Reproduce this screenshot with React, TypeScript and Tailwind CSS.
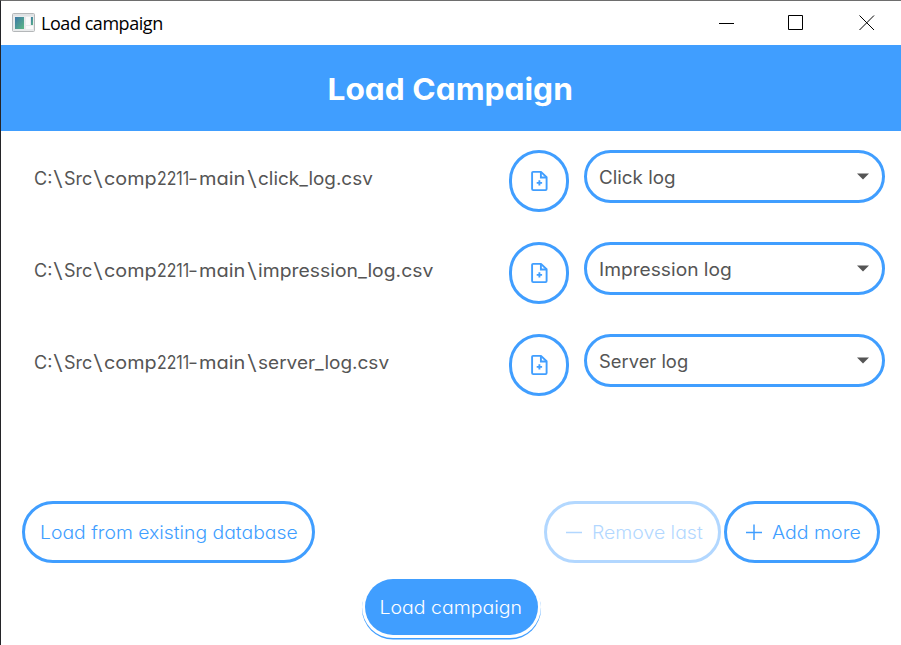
import React from "react";

const rows = [
  { file: "click_log.csv", type: "Click log", fileClass: "scale-x-[1.05]", typeClass: "scale-x-[1.045]" },
  { file: "impression_log.csv", type: "Impression log", fileClass: "scale-x-[1.075]", typeClass: "scale-x-[1.065]" },
  { file: "server_log.csv", type: "Server log", fileClass: "scale-x-[1.055]", typeClass: "scale-x-[1.02]" },
];

function AppIcon() {
  return (
    <svg width="24" height="20" viewBox="0 0 24 20" className="ml-[11px] shrink-0">
      <defs>
        <linearGradient id="pane" x1="0" y1="0" x2="1" y2="1">
          <stop offset="0" stopColor="#3d78a8" />
          <stop offset="1" stopColor="#5cb884" />
        </linearGradient>
      </defs>
      <rect x="0.5" y="0.5" width="22" height="18" rx="1" fill="#e9ebec" stroke="#b4b7b9" />
      <path d="M1 2H22" stroke="#d6dadd" />
      <rect x="3" y="4" width="9" height="12" fill="url(#pane)" />
      <rect x="14" y="4" width="4" height="8" fill="#fafafa" />
      <rect x="19" y="4" width="2" height="8" fill="url(#pane)" />
      <rect x="14" y="13" width="7" height="3" fill="#fafafa" />
    </svg>
  );
}

function FilePlus() {
  return (
    <svg width="20" height="22" viewBox="0 0 20 22" fill="none" stroke="#409eff" strokeWidth="1.9">
      <path d="M4.1 1.9H12L17.6 7.2V19Q17.6 20.1 16.5 20.1H4.3Q3.1 20.1 3.1 19V3Q3.1 1.9 4.1 1.9Z" strokeLinejoin="round" />
      <path d="M11.9 2V7.5H17.5M10.4 10.2V15.6M7.7 12.9H13.1" />
    </svg>
  );
}

function Backslash() {
  return (
    <span className="w-[10px] shrink-0 text-center">
      <span className="inline-block scale-x-[1.6] scale-y-[1.15] font-light">\</span>
    </span>
  );
}

export default function App() {
  return (
    <div className="flex h-[645px] w-[901px] flex-col overflow-hidden border-l border-t border-l-[#242428] border-t-[#6e6e6e] bg-white font-['Inter','Liberation_Sans',sans-serif] [font-feature-settings:'cv11']">
      <header className="flex h-11 shrink-0 items-center">
        <AppIcon />
        <span className="ml-[5px] font-['Open_Sans','Noto_Sans',sans-serif] text-[18px] leading-6 tracking-[-0.45px] text-black [font-feature-settings:normal]">Load campaign</span>
        <div className="ml-auto mr-[26px] flex items-center gap-[54px]">
          <svg width="16" height="16" viewBox="0 0 16 16" className="mr-[-1px]"><path d="M0 8.5H15" stroke="#000" /></svg>
          <svg width="16" height="16" viewBox="0 0 16 16" fill="none"><path d="M.5 .5H14.5V14.5H.5Z" stroke="#000" /></svg>
          <svg width="16" height="16" viewBox="0 0 16 16" className="ml-px"><path d="M.5 .5L15 15M15 .5L.5 15" stroke="#000" /></svg>
        </div>
      </header>
      <h1 className="flex h-[86px] shrink-0 items-center justify-center bg-[#409eff] pr-[2px] pt-[3px] text-[30px] font-bold text-white">
        <span className="scale-x-[1.056]">Load Campaign</span>
      </h1>
      <main className="flex h-[370px] shrink-0 flex-col gap-[30px] pl-[33px] pr-4 pt-[19px]">
        {rows.map((r) => (
          <div key={r.file} className="flex h-[62px] items-start">
            <span className="flex w-[475px] whitespace-nowrap pt-[15px] text-[18px] leading-7 text-[#555]">
              <span className="w-[19px]">C:</span>
              <Backslash />
              <span className="w-[30px] pl-px">Src</span>
              <Backslash />
              <span className="w-[54px] pl-px"><span className="inline-block origin-left scale-x-[1.1]">comp</span></span>
              <span className="w-[31px]"><span className="inline-block origin-left scale-x-[0.88]">2211</span></span>
              <span className="w-[11px]"><span className="inline-block origin-left scale-x-[1.2]">-</span></span>
              <span className="w-[48px]"><span className="inline-block origin-left scale-x-[1.11]">main</span></span>
              <Backslash />
              <span className={`origin-left pl-px ${r.fileClass}`}>{r.file}</span>
            </span>
            <button className="flex h-[61.5px] w-[60px] items-center justify-center rounded-full border-3 border-[#409eff]">
              <FilePlus />
            </button>
            <button className="ml-[15px] flex h-[53px] w-[301px] items-center rounded-full border-3 border-[#409eff] pl-3 pr-[18px] text-[18px] text-[#555]">
              <span className={`origin-left pt-0.5 ${r.typeClass}`}>{r.type}</span>
              <svg width="12" height="7" viewBox="0 0 12 7" className="ml-auto mr-[-5px]"><path d="M0 .5H12L6 6.5Z" fill="#555" /></svg>
            </button>
          </div>
        ))}
      </main>
      <div className="flex h-[62px] shrink-0 px-[21px] text-[18px] text-[#409eff]">
        <button className="flex w-[293px] items-center justify-center rounded-full border-3 border-[#409eff] font-light">
          <span className="scale-x-[1.075] whitespace-nowrap">Load from existing database</span>
        </button>
        <button className="ml-auto flex w-[177px] items-center rounded-full border-3 border-[#409eff] pl-[19px] font-light opacity-40">
          <svg width="16" height="16" viewBox="0 0 16 16" className="mr-[10px]"><path d="M0 8.5H16" stroke="currentColor" strokeWidth="1.5" /></svg>
          <span className="origin-left scale-x-[1.08] whitespace-nowrap">Remove last</span>
        </button>
        <button className="ml-[3px] flex w-[156px] items-center rounded-full border-3 border-[#409eff] pl-[19px] font-light">
          <svg width="16" height="16" viewBox="0 0 16 16" className="mr-[10px]"><path d="M0 8.5H16M8 0.5V16" stroke="currentColor" strokeWidth="1.5" /></svg>
          <span className="origin-left scale-x-[1.085] whitespace-nowrap">Add more</span>
        </button>
      </div>
      <button className="ml-[361px] mt-[13px] flex h-[62px] w-[179px] shrink-0 rounded-full bg-white p-[3px] text-[18px] font-light text-white shadow-[0_1.5px_0.5px_#409eff]">
        <span className="flex h-[56px] flex-1 items-center justify-center rounded-full bg-[#409eff] pr-px">
          <span className="scale-x-[1.084] whitespace-nowrap">Load campaign</span>
        </span>
      </button>
    </div>
  );
}
